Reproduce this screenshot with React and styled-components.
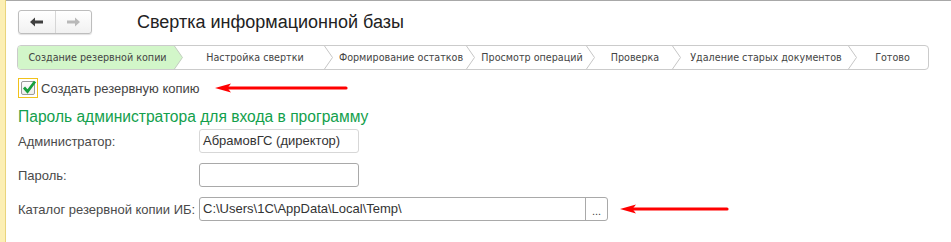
import styled, { createGlobalStyle } from 'styled-components'

const GlobalStyle = createGlobalStyle`
  body {
    margin: 0;
    background: #fff;
    font-family: "Liberation Sans", Arial, sans-serif;
  }
`

const Page = styled.div`
  display: flex;
  width: 951px;
  height: 242px;
  overflow: hidden;
`
const Strip = styled.div`
  width: 5px;
  background: #fcefb4;
  border-right: 1px solid #e9d47c;
`
const Main = styled.div`
  flex: 1;
  border-top: 1px solid #a8a8a8;
  padding: 9px 0 0 12px;
`
const Header = styled.div`
  display: flex;
  align-items: center;
  height: 24px;
`
const NavGroup = styled.div`
  display: flex;
  width: 74px;
  height: 24px;
  box-sizing: border-box;
  border: 1px solid #bdbdbd;
  border-radius: 3px;
  background: linear-gradient(#ffffff, #f1f1f1);
  box-shadow: 0 1px 1px rgba(0, 0, 0, 0.12);
`
const NavButton = styled.div`
  flex: 1;
  display: flex;
  align-items: center;
  justify-content: center;
  & + & {
    border-left: 1px solid #d6d6d6;
  }
`
const Title = styled.h1`
  margin: 0 0 0 45px;
  font-size: 18px;
  font-weight: normal;
  color: #222;
  line-height: 24px;
`
const Steps = styled.div`
  display: flex;
  width: 912px;
  height: 25px;
  box-sizing: border-box;
  margin: 11px 0 0 -1px;
  border: 1px solid #cbcbcb;
  border-radius: 4px;
  overflow: hidden;
`
const Step = styled.div`
  position: relative;
  flex: ${p => (p.$w ? `0 0 ${p.$w}px` : '1')};
  display: flex;
  align-items: center;
  justify-content: center;
  padding-right: ${p => (p.$last ? 0 : 6)}px;
  box-sizing: border-box;
  font-family: "DejaVu Sans", Verdana, sans-serif;
  font-size: 9.6px;
  color: #444;
  background: ${p => (p.$active ? '#d2f6c9' : 'transparent')};
  clip-path: ${p =>
    p.$active
      ? 'polygon(0 0, calc(100% - 8px) 0, 100% 50%, calc(100% - 8px) 100%, 0 100%)'
      : 'none'};
`
const ChevronSvg = styled.svg`
  position: absolute;
  right: 0;
  top: 0;
  width: 9px;
  height: 100%;
`
const CheckRow = styled.div`
  display: flex;
  align-items: center;
  margin-top: 8px;
  height: 20px;
`
const FocusBox = styled.div`
  width: 20px;
  height: 20px;
  box-sizing: border-box;
  border: 1px solid #f1c21b;
  display: flex;
  align-items: center;
  justify-content: center;
`
const Box = styled.div`
  width: 14px;
  height: 14px;
  box-sizing: border-box;
  border: 1px solid #9a9a9a;
  border-radius: 2px;
  background: linear-gradient(#fdfdfd, #ececec);
  display: flex;
  align-items: center;
  justify-content: center;
  overflow: visible;
`
const CheckLabel = styled.span`
  margin-left: 3px;
  font-size: 13px;
  color: #444;
`
const ArrowSvg = styled.svg`
  margin-left: ${p => p.$gap}px;
  flex: none;
`
const Heading = styled.div`
  margin-top: 10px;
  font-size: 15.6px;
  line-height: 18px;
  color: #12a04c;
`
const Form = styled.div`
  display: grid;
  grid-template-columns: 181px auto;
  row-gap: 10px;
  align-items: center;
  margin-top: 3px;
`
const Label = styled.div`
  font-size: 13px;
  color: #4a4a4a;
`
const FieldRow = styled.div`
  display: flex;
  align-items: center;
`
const Field = styled.div`
  display: flex;
  width: ${p => p.$w}px;
  height: 24px;
  box-sizing: border-box;
  border: 1px solid ${p => (p.$light ? '#d7d7d7' : '#a9a9a9')};
  border-radius: 3px;
  background: #fff;
`
const FieldText = styled.div`
  flex: 1;
  padding-left: 3px;
  font-size: 13px;
  line-height: 22px;
  color: #333;
  white-space: nowrap;
`
const PickButton = styled.div`
  width: 21px;
  border-left: 1px solid #a9a9a9;
  display: flex;
  align-items: center;
  justify-content: center;
  font-size: 11px;
  color: #444;
  padding-top: 3px;
`

const steps = [
  { text: 'Создание резервной копии', w: 165, active: true },
  { text: 'Настройка свертки', w: 150 },
  { text: 'Формирование остатков', w: 142 },
  { text: 'Просмотр операций', w: 120 },
  { text: 'Проверка', w: 86 },
  { text: 'Удаление старых документов', w: 176 },
  { text: 'Готово' },
]

function Chevron() {
  return (
    <ChevronSvg viewBox="0 0 9 23" preserveAspectRatio="none">
      <polyline points="0.5,0 8.5,11.5 0.5,23" fill="none" stroke="#c6c6c6" strokeWidth="1" />
    </ChevronSvg>
  )
}

function RedArrow({ width, gap }) {
  return (
    <ArrowSvg $gap={gap} width={width} height={10} viewBox={`0 0 ${width} 10`}>
      <line x1="12" y1="5" x2={width - 2} y2="5" stroke="#ff0000" strokeWidth="3.2" strokeLinecap="round" />
      <path d="M0 5 L16 0.5 L12.5 5 L16 9.5 Z" fill="#ff0000" />
    </ArrowSvg>
  )
}

export default function App() {
  return (
    <>
      <GlobalStyle />
      <Page>
        <Strip />
        <Main>
          <Header>
            <NavGroup>
              <NavButton>
                <svg width="14" height="10" viewBox="0 0 14 10">
                  <path d="M0 5 L5 0.5 L5 3.5 L13 3.5 L13 6.5 L5 6.5 L5 9.5 Z" fill="#3f3f3f" />
                </svg>
              </NavButton>
              <NavButton>
                <svg width="14" height="10" viewBox="0 0 14 10">
                  <path d="M14 5 L9 0.5 L9 3.5 L1 3.5 L1 6.5 L9 6.5 L9 9.5 Z" fill="#b9b9b9" />
                </svg>
              </NavButton>
            </NavGroup>
            <Title>Свертка информационной базы</Title>
          </Header>

          <Steps>
            {steps.map((s, i) => (
              <Step key={s.text} $w={s.w} $active={s.active} $last={i === steps.length - 1}>
                {s.text}
                {i < steps.length - 1 && <Chevron />}
              </Step>
            ))}
          </Steps>

          <CheckRow>
            <FocusBox>
              <Box>
                <svg width="16" height="16" viewBox="0 0 16 16" style={{ margin: '-3px -2px 0 -1px', flex: 'none' }}>
                  <path d="M3 8.5 L6.5 12.5 L14 2.5" fill="none" stroke="#16a03c" strokeWidth="2.8" />
                </svg>
              </Box>
            </FocusBox>
            <CheckLabel>Создать резервную копию</CheckLabel>
            <RedArrow width={133} gap={15} />
          </CheckRow>

          <Heading>Пароль администратора для входа в программу</Heading>

          <Form>
            <Label>Администратор:</Label>
            <Field $w={160} $light>
              <FieldText>АбрамовГС (директор)</FieldText>
            </Field>

            <Label>Пароль:</Label>
            <Field $w={160}>
              <FieldText />
            </Field>

            <Label>Каталог резервной копии ИБ:</Label>
            <FieldRow>
              <Field $w={409}>
                <FieldText>C:\Users\1C\AppData\Local\Temp\</FieldText>
                <PickButton>...</PickButton>
              </Field>
              <RedArrow width={109} gap={12} />
            </FieldRow>
          </Form>
        </Main>
      </Page>
    </>
  )
}
